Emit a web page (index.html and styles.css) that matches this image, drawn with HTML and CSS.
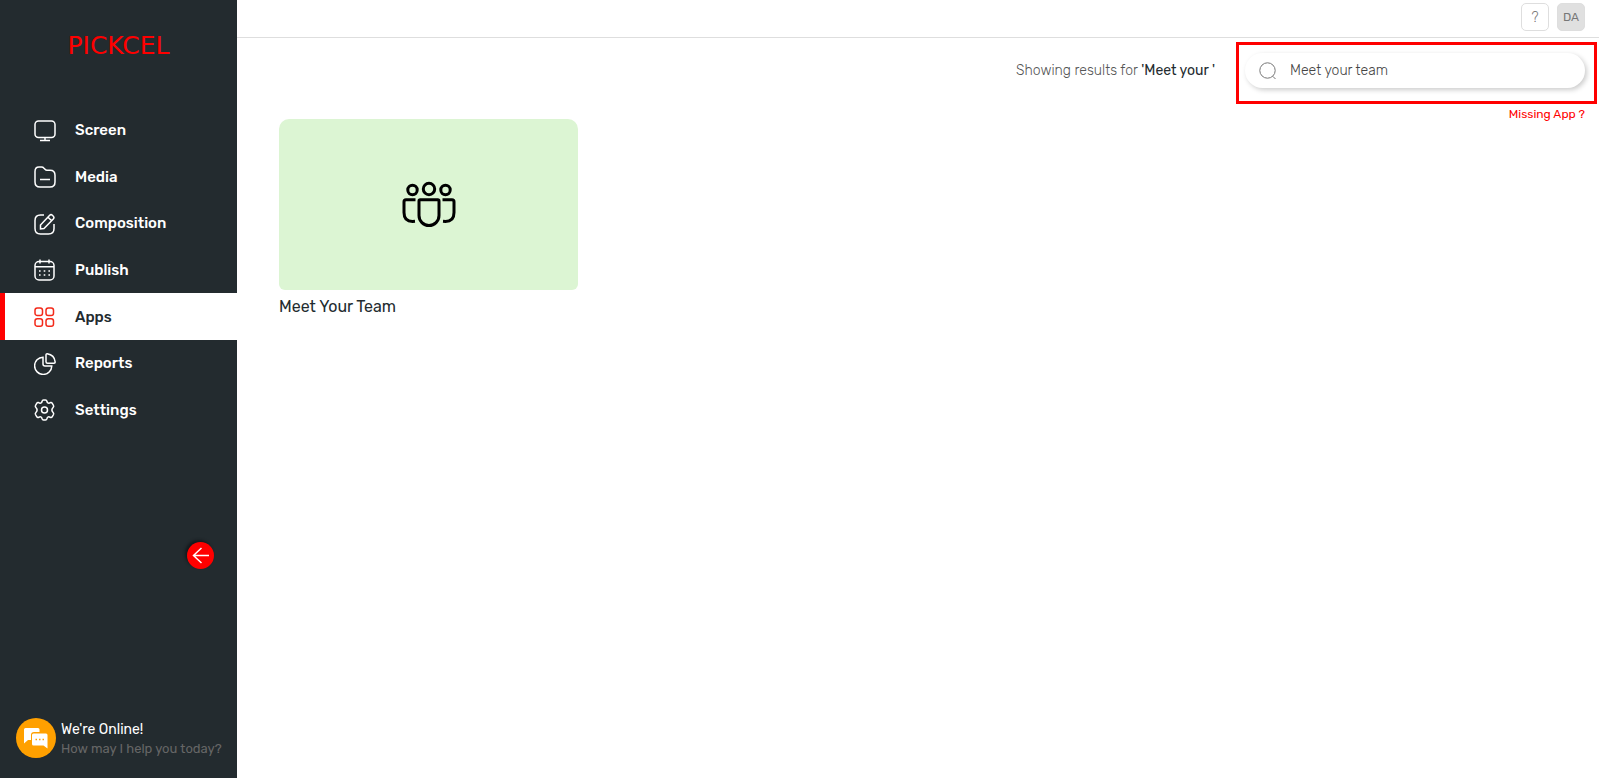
FILE: index.html
```html
<!DOCTYPE html>
<html lang="en">
<head>
<meta charset="utf-8">
<title>Pickcel - Apps</title>
<link rel="stylesheet" href="styles.css">
</head>
<body>
<div class="app">
  <aside class="sidebar">
    <a class="logo" href="#">PICKCEL</a>
    <nav class="nav">
      <a class="nav-item" href="#">
        <svg class="icon" viewBox="0 0 22 22"><rect x="1" y="1" width="20" height="16.5" rx="3.5"/><path d="M11 17.5V20M6 20.4H16"/></svg>
        <span>Screen</span>
      </a>
      <a class="nav-item" href="#">
        <svg class="icon" viewBox="0 0 22 22"><path d="M1 5.5Q1 1 5 1H7.5Q9 1 10 2.2L11 3.3Q11.800 4.300 13 4.300H16Q21 4.300 21 9.300V16Q21 21 16 21H6Q1 21 1 16ZM6 13.500H16"/></svg>
        <span>Media</span>
      </a>
      <a class="nav-item" href="#">
        <svg class="icon" viewBox="0 0 22 22"><path d="M10 2H6.500Q1 2 1 7.500V15.500Q1 21 6.500 21H14.500Q20 21 20 15.500V11"/><path d="M6.500 16V12L15.700 2.300Q17 1 18.400 2.300L19.300 3.200Q20.600 4.500 19.300 5.900L10 15.500ZM14 4.200L17.700 7.800"/></svg>
        <span>Composition</span>
      </a>
      <a class="nav-item" href="#">
        <svg class="icon" viewBox="0 0 22 22"><rect x="1" y="2.500" width="19" height="18.500" rx="4"/><path d="M1 7.800H20M6 .5V4.500M15 .5V4.500"/><path class="dots" d="M5 12H6.600M9.700 12H11.300M14.400 12H16M5 16H6.600M9.700 16H11.300M14.400 16H16"/></svg>
        <span>Publish</span>
      </a>
      <a class="nav-item active" href="#" aria-current="page">
        <svg class="icon" viewBox="0 0 22 22"><rect x="1" y="2" width="7.500" height="7.500" rx="2.300"/><rect x="12" y="2" width="7.500" height="7.500" rx="2.300"/><rect x="1" y="12.700" width="7.500" height="7.500" rx="2.300"/><rect x="12" y="12.700" width="7.500" height="7.500" rx="2.300"/></svg>
        <span>Apps</span>
      </a>
      <a class="nav-item" href="#">
        <svg class="icon" viewBox="0 0 22 22"><path d="M9 4.200A8.600 8.600 0 1 0 17.800 13H11Q9 13 9 11Z"/><path d="M12 2Q12 .7 13.200 .8Q20.500 2 21.200 9Q21.200 10.200 20 10.200H13.500Q12 10.200 12 8.700Z"/></svg>
        <span>Reports</span>
      </a>
      <a class="nav-item" href="#">
        <svg class="icon" viewBox="0 0 22 22"><circle cx="10.500" cy="11" r="3"/><path d="M8 2.500Q8.400 1 9.500 1H11.500Q12.600 1 13 2.500Q13.500 4.600 15.500 4L16.700 3.600Q17.700 3.400 18.300 4.400L19.500 6.500Q20 7.600 19.100 8.500Q16.700 11 19.100 13.500Q20 14.400 19.500 15.500L18.300 17.600Q17.700 18.600 16.700 18.400L15.500 18Q13.500 17.400 13 19.500Q12.600 21 11.500 21H9.500Q8.400 21 8 19.500Q7.500 17.400 5.500 18L4.300 18.400Q3.300 18.600 2.700 17.600L1.500 15.500Q1 14.400 1.900 13.500Q4.300 11 1.900 8.500Q1 7.600 1.500 6.500L2.700 4.400Q3.300 3.400 4.300 3.600L5.500 4Q7.500 4.600 8 2.500Z"/></svg>
        <span>Settings</span>
      </a>
    </nav>
    <button class="collapse" type="button" aria-label="Collapse menu">
      <svg viewBox="0 0 27 27"><path d="M22 13.500H6.500M14.500 6L6.500 13.500L14.500 21"/></svg>
    </button>
    <a class="chat" href="#">
      <svg class="chat-icon" viewBox="0 0 40 40"><circle class="disc" cx="20" cy="20" r="20"/><path class="bubble" d="M9.500 10H22Q23.500 10 23.500 11.500V14H18Q15 14 15 17V22H12L8 25.500V11.500Q8 10 9.500 10Z"/><path class="bubble" d="M17.500 15.500H30Q31.500 15.500 31.500 17V30.500L27.500 27.500H17.500Q16 27.500 16 26V17Q16 15.500 17.500 15.500Z"/><path class="ellipsis" d="M19.500 21.500H21M23 21.500H24.500M26.500 21.500H28"/></svg>
      <span class="chat-text"><span class="chat-title">We're Online!</span><span class="chat-sub">How may I help you today?</span></span>
    </a>
  </aside>

  <div class="page">
    <header class="topbar">
      <button class="square" type="button" aria-label="Help">?</button>
      <button class="square user" type="button">DA</button>
    </header>
    <main>
      <div class="search-row">
        <p class="results">Showing results for <span class="term">'Meet your '</span></p>
        <div class="highlight">
          <label class="search">
            <svg viewBox="0 0 18 18"><circle cx="8.500" cy="8.500" r="7.700"/><path d="M13.800 14.300L16.500 17"/></svg>
            <input type="text" value="Meet your team" aria-label="Search apps">
          </label>
        </div>
      </div>
      <a class="missing" href="#">Missing App ?</a>
      <section class="cards">
        <a class="card" href="#">
          <span class="tile">
            <svg viewBox="0 0 54 48"><circle cx="27" cy="8" r="5.700"/><circle cx="10.500" cy="9" r="4.700"/><circle cx="43.500" cy="9" r="4.700"/><path d="M18.200 18.700H35.800Q37 18.700 37 20V34.500A10 10 0 0 1 17 34.500V20Q17 18.700 18.200 18.700Z"/><path d="M13.500 18.700H4Q2 18.700 2 20.700V31.500Q2 40.500 10.500 40.500L13 40.300M40.500 18.700H50Q52 18.700 52 20.700V31.500Q52 40.500 43.500 40.500L41 40.300"/></svg>
          </span>
          <span class="card-name">Meet Your Team</span>
        </a>
      </section>
    </main>
  </div>
</div>
</body>
</html>
```
FILE: styles.css
```css
* { box-sizing: border-box; }
body {
  margin: 0;
  font-family: Rubik, Roboto, sans-serif;
  font-size: 14px;
  color: #232b2f;
  background: #fff;
}
a { color: inherit; text-decoration: none; }
button, input { font: inherit; }
svg { display: block; flex: none; fill: none; stroke: currentColor; }
.app { display: flex; min-height: 100vh; }

.sidebar {
  flex: none;
  width: 237px;
  display: flex;
  flex-direction: column;
  background: #232b2f;
  color: #fff;
}
.logo {
  padding-top: 30px;
  height: 107px;
  text-align: center;
  font: 400 25px/32px "DejaVu Sans", sans-serif;
  color: #f00;
}
.nav { display: grid; grid-auto-rows: 1fr; height: 326px; }
.nav-item {
  display: flex;
  align-items: center;
  gap: 19px;
  padding-left: 34px;
  font-size: 15px;
  font-weight: 500;
}
.nav-item .icon { width: 22px; height: 22px; margin-top: 1px; stroke-width: 1.5; }
.icon .dots { stroke-width: 1.7; }
.active { background: #fff; color: #232b2f; border-left: 5px solid #f00; padding-left: 29px; }
.active .icon { color: #f32a1a; }
.collapse {
  width: 27px;
  height: 27px;
  margin: auto 23px 149px auto;
  padding: 0;
  border: 0;
  border-radius: 50%;
  background: #f00;
  color: #fff;
  box-shadow: -2px -2px 3px #14191c;
}
.collapse svg { width: 27px; height: 27px; stroke-width: 1.5; }
.chat { display: flex; align-items: center; gap: 5px; padding: 0 16px 20px; }
.chat-icon { width: 40px; height: 40px; stroke: none; }
.chat-icon .disc { fill: #ffa000; }
.chat-icon .bubble { fill: #fff; }
.chat-icon .ellipsis { stroke: #ffa000; stroke-width: 1.4; }
.chat-text { display: flex; flex-direction: column; padding-top: 2px; line-height: 19px; white-space: nowrap; }
.chat-title { font-weight: 400; }
.chat-sub { color: #666; font-size: 13px; }

.page { flex: 1; min-width: 0; }
.topbar {
  display: flex;
  justify-content: flex-end;
  gap: 8px;
  padding: 3px 14px 6px;
  border-bottom: 1px solid #dedede;
}
.square {
  width: 28px;
  height: 28px;
  padding: 0;
  border: 1px solid #dedede;
  border-radius: 5px;
  background: #fff;
  color: #777;
  font-weight: 300;
}
.user { background: #e0e0e0; font-size: 12px; font-weight: 400; }
.search-row { display: flex; align-items: center; justify-content: flex-end; gap: 21px; padding: 4px 2px 0 0; }
.results { margin: 0 0 6px; color: #555; font-weight: 300; }
.term { color: #232b2f; font-weight: 400; }
.highlight { width: 361px; padding: 8px 9px 13px 6px; border: 3px solid #f00; }
.search {
  display: flex;
  align-items: center;
  gap: 13px;
  height: 35px;
  padding-left: 14px;
  border-radius: 18px;
  box-shadow: 2px 2px 5px #ccc;
  color: #777;
}
.search svg { width: 18px; height: 18px; }
.search input { flex: 1; min-width: 0; padding: 0; border: 0; outline: 0; background: none; color: #444; font-weight: 300; }
.missing { display: block; width: fit-content; margin: 3px 14px 0 auto; font-size: 12px; line-height: 14px; color: #f00; }
.cards { display: grid; grid-template-columns: repeat(auto-fill, 299px); margin-top: -2px; padding: 0 42px; }
.card { display: flex; flex-direction: column; gap: 7px; font-size: 16px; line-height: 20px; }
.tile {
  display: grid;
  place-items: center;
  height: 171px;
  border-radius: 10px 10px 6px 6px;
  background: #dcf5d3;
  color: #000;
}
.tile svg { width: 54px; height: 48px; stroke-width: 3; }
```
